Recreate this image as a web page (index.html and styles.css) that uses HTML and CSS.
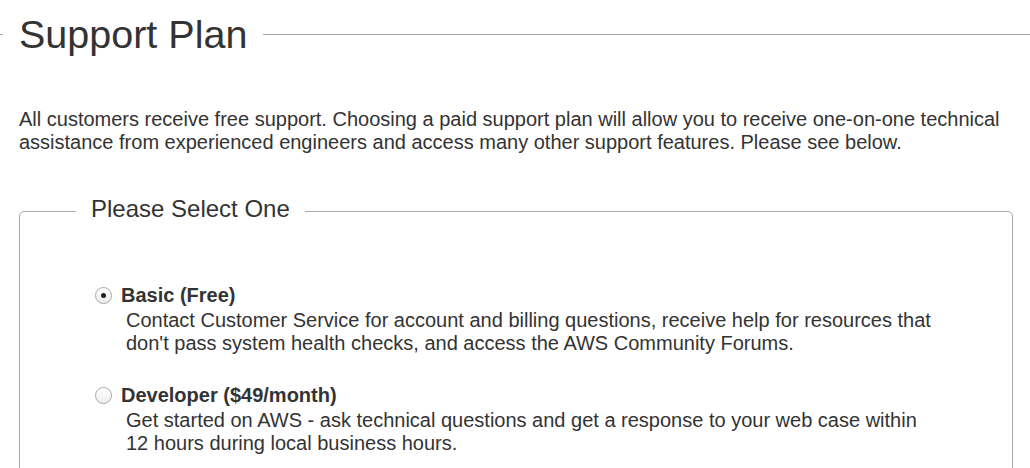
FILE: index.html
```html
<!DOCTYPE html>
<html>
<head>
<meta charset="utf-8">
<link rel="stylesheet" href="styles.css">
</head>
<body>
<div class="page">
  <div class="title-row">
    <span class="rule rule-left"></span>
    <h1 class="title">Support Plan</h1>
    <span class="rule rule-right"></span>
  </div>
  <p class="intro">All customers receive free support. Choosing a paid support plan will allow you to receive one-on-one technical assistance from experienced engineers and access many other support features. Please see below.</p>
  <fieldset class="plans">
    <legend class="plans-legend">Please Select One</legend>
    <label class="plan">
      <span class="radio checked"></span>
      <span class="plan-body">
        <span class="plan-name">Basic (Free)</span>
        <span class="plan-desc">Contact Customer Service for account and billing questions, receive help for resources that don't pass system health checks, and access the AWS Community Forums.</span>
      </span>
    </label>
    <label class="plan">
      <span class="radio"></span>
      <span class="plan-body">
        <span class="plan-name">Developer ($49/month)</span>
        <span class="plan-desc">Get started on AWS - ask technical questions and get a response to your web case within 12 hours during local business hours.</span>
      </span>
    </label>
  </fieldset>
</div>
</body>
</html>
```
FILE: styles.css
```css
html, body {
  margin: 0;
  padding: 0;
  background: #fff;
}
body {
  font-family: "Liberation Sans", Arial, sans-serif;
  color: #333;
}
.page {
  width: 1030px;
  height: 468px;
  overflow: hidden;
}
.title-row {
  display: flex;
  align-items: center;
  gap: 16px;
  padding-top: 11px;
  height: 46px;
}
.rule {
  height: 1px;
  background: #a3a3a3;
}
.rule-left {
  width: 3px;
}
.rule-right {
  flex: 1;
}
.title {
  margin: 0;
  font-weight: normal;
  font-size: 39.5px;
  line-height: 46px;
  color: #333;
}
.intro {
  margin: 51px 0 0 19px;
  width: 1000px;
  font-size: 20px;
  line-height: 23px;
}
.plans {
  margin: 41px 0 0 19px;
  width: 994px;
  box-sizing: border-box;
  border: 1px solid #aaa;
  border-radius: 5px;
  padding: 56px 0 0 75px;
  height: 400px;
}
.plans-legend {
  margin-left: -19px;
  padding: 0 15px 5px;
  font-size: 24px;
  line-height: 28px;
}
.plan {
  display: flex;
  align-items: flex-start;
  margin-bottom: 29px;
}
.radio {
  width: 17px;
  height: 17px;
  border: 1px solid #a8a8a8;
  border-radius: 50%;
  box-sizing: border-box;
  margin: 3px 9px 0 0;
  background: linear-gradient(#fff, #eeeeee);
  position: relative;
  flex: none;
}
.radio.checked::after {
  content: "";
  position: absolute;
  left: 5px;
  top: 5px;
  width: 5px;
  height: 5px;
  border-radius: 50%;
  background: #222;
}
.plan-body {
  display: flex;
  flex-direction: column;
}
.plan-name {
  font-weight: bold;
  font-size: 20px;
  line-height: 23px;
}
.plan-desc {
  margin: 2px 0 0 5px;
  width: 810px;
  font-size: 20px;
  line-height: 23px;
}
```
